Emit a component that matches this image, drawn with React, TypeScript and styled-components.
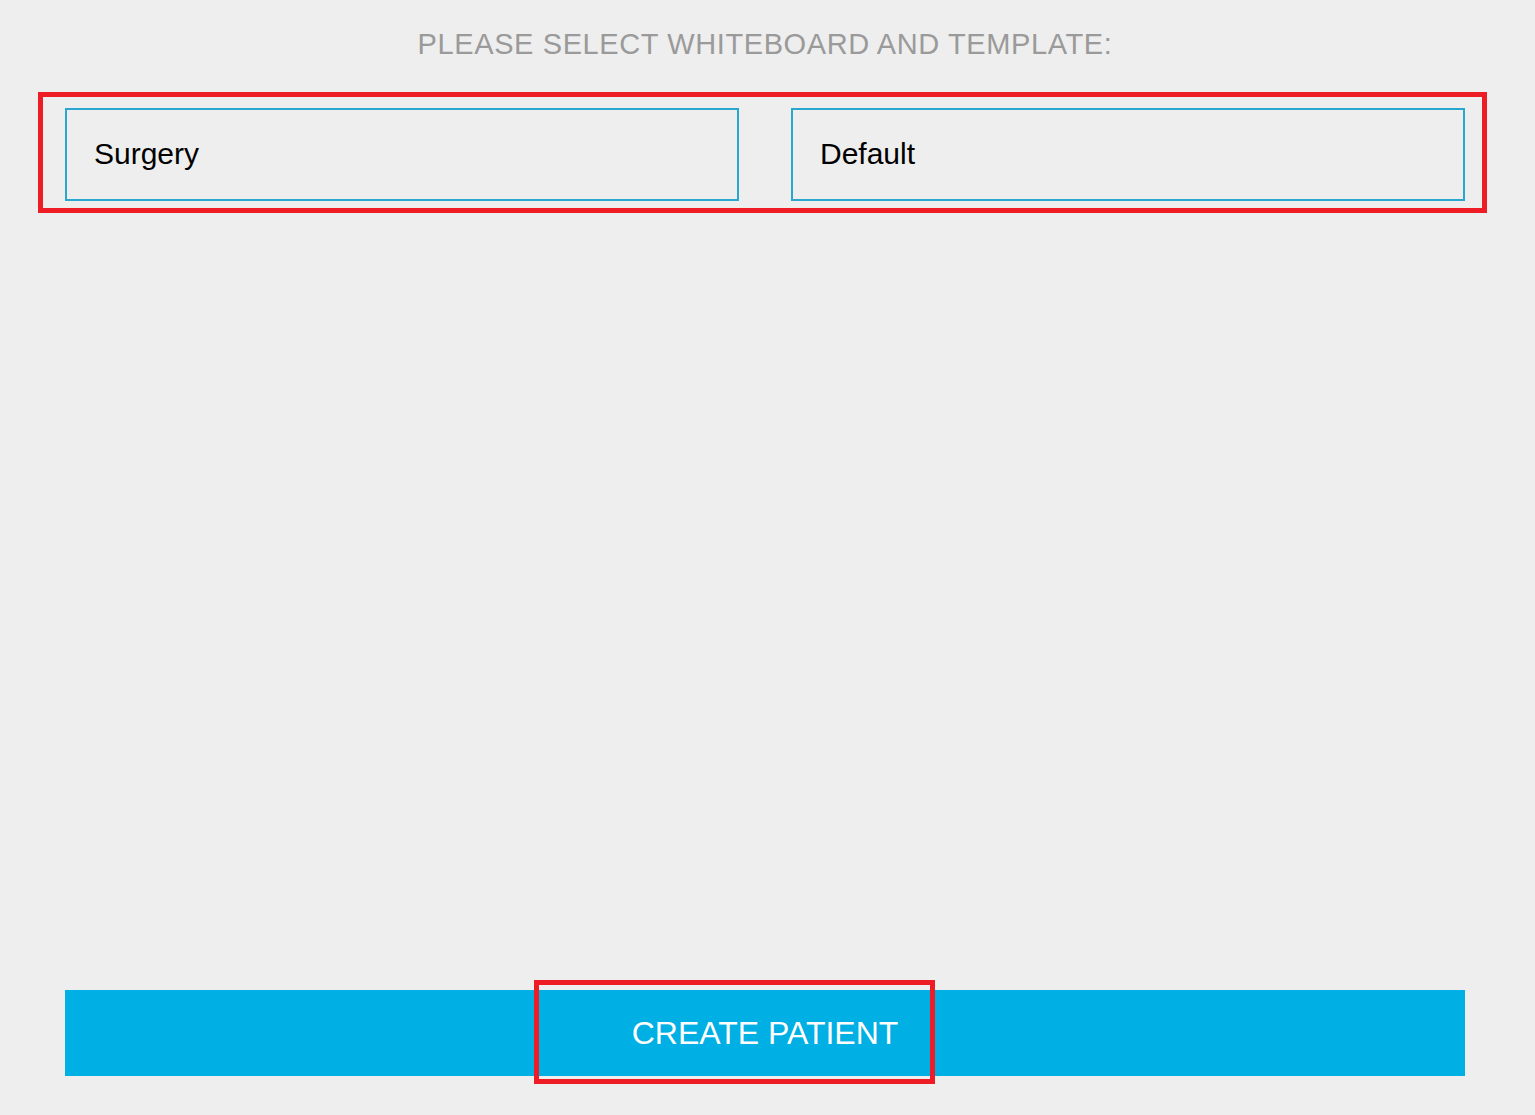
import styled, { createGlobalStyle } from 'styled-components';

const GlobalStyle = createGlobalStyle`
  html, body {
    margin: 0;
    padding: 0;
    background: #eeeeee;
  }
  body {
    font-family: "Liberation Sans", Arial, Helvetica, sans-serif;
  }
`;

const Page = styled.div`
  min-height: 100vh;
  box-sizing: border-box;
  display: flex;
  flex-direction: column;
  padding: 28px 0 39px 65px;
  width: 1465px;
`;

const Title = styled.h1`
  margin: 0 0 48px;
  font-size: 29px;
  line-height: 32px;
  font-weight: 400;
  letter-spacing: 0.6px;
  color: #9a9a9a;
  text-align: center;
  text-transform: uppercase;
`;

const Fields = styled.div`
  position: relative;
  display: grid;
  grid-template-columns: 1fr 1fr;
  column-gap: 52px;
`;

const Field = styled.div`
  height: 93px;
  box-sizing: border-box;
  border: 2px solid #2aa7cf;
  display: flex;
  align-items: center;
  padding: 0 0 2px 27px;
  font-size: 30px;
  color: #000;
`;

// red highlight frame drawn over the content
const Highlight = styled.div<{ $top: number; $left: number; $width: number; $height: number }>`
  position: absolute;
  top: ${(p) => p.$top}px;
  left: ${(p) => p.$left}px;
  width: ${(p) => p.$width}px;
  height: ${(p) => p.$height}px;
  box-sizing: border-box;
  border: 5px solid #ee1c25;
  pointer-events: none;
`;

const Footer = styled.div`
  margin-top: auto;
  position: relative;
`;

const CreateButton = styled.button`
  display: flex;
  align-items: center;
  justify-content: center;
  width: 100%;
  height: 86px;
  border: none;
  background: #00afe4;
  color: #fff;
  font-family: inherit;
  font-size: 32px;
  text-transform: uppercase;
  cursor: pointer;
`;

export default function App() {
  return (
    <>
      <GlobalStyle />
      <Page>
        <Title>Please select whiteboard and template:</Title>
        <Fields>
          <Field>Surgery</Field>
          <Field>Default</Field>
          <Highlight $top={-16} $left={-27} $width={1449} $height={121} />
        </Fields>
        <Footer>
          <CreateButton>Create Patient</CreateButton>
          <Highlight $top={-10} $left={469} $width={401} $height={104} />
        </Footer>
      </Page>
    </>
  );
}
